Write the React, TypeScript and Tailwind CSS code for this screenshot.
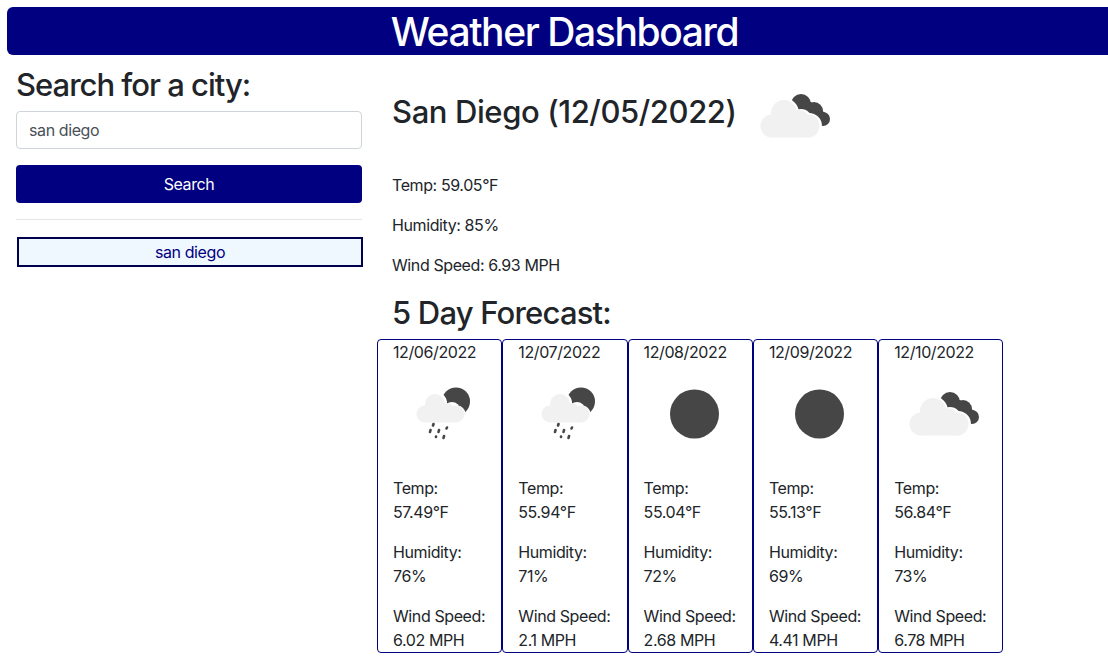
import React from "react";

type IconKind = "clouds" | "rain" | "clear";

function WeatherIcon({ kind }: { kind: IconKind }) {
  return (
    <svg viewBox="0 0 100 100" className="h-[100px] w-[100px] shrink-0">
      {kind === "clear" && <circle cx="50.5" cy="50" r="24.5" fill="#464646" />}
      {kind === "clouds" && (
        <>
          <g fill="#464646">
            <circle cx="56" cy="38" r="10" />
            <circle cx="69" cy="45" r="9" />
            <circle cx="78" cy="53" r="7" />
            <path d="M50 34 L66 36 L84 50 L72 60 L60 50 Z" />
          </g>
          <g fill="#fff">
            <circle cx="39" cy="47" r="15" />
            <circle cx="56" cy="54" r="11" />
            <circle cx="64" cy="60" r="13" />
          </g>
          <g fill="#f1f1f1">
            <circle cx="27" cy="60" r="11.5" />
            <circle cx="39" cy="47" r="13" />
            <circle cx="54" cy="54" r="10" />
            <circle cx="63" cy="60" r="11.5" />
            <rect x="27" y="56" width="36" height="15.5" />
          </g>
        </>
      )}
      {kind === "rain" && (
        <>
          <circle cx="63" cy="37.5" r="14" fill="#464646" />
          <g fill="#fff">
            <circle cx="43" cy="39" r="11" />
            <circle cx="59" cy="46" r="8" />
            <circle cx="64" cy="50" r="8.5" />
          </g>
          <g fill="#f1f1f1">
            <circle cx="32" cy="50" r="8.5" />
            <circle cx="42" cy="40" r="10" />
            <circle cx="54" cy="46" r="7" />
            <circle cx="63" cy="50" r="8.5" />
            <rect x="32" y="48" width="31" height="10.5" />
          </g>
          <g stroke="#464646" strokeWidth="2.6" strokeLinecap="round">
            <path d="M40.5 60 L40 61.5" />
            <path d="M37.5 66 L37 68" />
            <path d="M46 66 L45.5 68" />
            <path d="M54 63.5 L53.5 64.5" />
            <path d="M43 72.5 L43 73" />
            <path d="M51 72 L50.5 74" />
          </g>
        </>
      )}
    </svg>
  );
}

const forecast: { date: string; icon: IconKind; temp: string; humidity: string; wind: string }[] = [
  { date: "12/06/2022", icon: "rain", temp: "57.49°F", humidity: "76%", wind: "6.02 MPH" },
  { date: "12/07/2022", icon: "rain", temp: "55.94°F", humidity: "71%", wind: "2.1 MPH" },
  { date: "12/08/2022", icon: "clear", temp: "55.04°F", humidity: "72%", wind: "2.68 MPH" },
  { date: "12/09/2022", icon: "clear", temp: "55.13°F", humidity: "69%", wind: "4.41 MPH" },
  { date: "12/10/2022", icon: "clouds", temp: "56.84°F", humidity: "73%", wind: "6.78 MPH" },
];

function ForecastCard({ day }: { day: (typeof forecast)[number] }) {
  return (
    <div className="w-[125.3px] rounded border border-[#000080] px-[15px]">
      <div>{day.date}</div>
      <WeatherIcon kind={day.icon} />
      <p className="mb-4 mt-3">
        Temp:
        <br />
        {day.temp}
      </p>
      <p className="mb-4">
        Humidity:
        <br />
        {day.humidity}
      </p>
      <p>
        Wind Speed:
        <br />
        {day.wind}
      </p>
    </div>
  );
}

export default function App() {
  return (
    <div className="h-[665px] overflow-hidden bg-white pl-[7px] pt-[7px] font-['Inter',sans-serif] text-base leading-6 tracking-[-0.4px] text-[#212529]">
      <header className="flex h-12 items-center justify-center rounded-l-md bg-[#000080] pl-[14px] pt-[2px] text-[39px] font-[550] tracking-[-1.4px] text-white">
        Weather Dashboard
      </header>
      <div className="flex">
        <aside className="ml-[9px] w-[346px] shrink-0 pt-[11px]">
          <h2 className="h-[45px] text-[31px] font-medium leading-[38px] tracking-[-1px]">
            Search for a city:
          </h2>
          <div className="flex h-[38px] items-center rounded border border-[#ced4da] px-3 text-[#495057]">
            san diego
          </div>
          <button className="mt-4 h-[38px] w-full rounded bg-[#000080] text-white">
            Search
          </button>
          <hr className="mt-4 border-[#e6e6e6]" />
          <button className="ml-px mt-[17px] h-[30px] w-full border-2 border-[#000050] bg-[#f0f8ff] text-[#000080]">
            san diego
          </button>
        </aside>
        <main className="ml-[15px] min-w-0 flex-1">
          <div className="flex h-[111px] pt-[11px]">
            <h2 className="ml-[15px] mt-[27px] h-[38px] text-[31px] font-medium leading-[38px] tracking-[-0.4px]">
              San Diego (12/05/2022)
            </h2>
            <div className="ml-2">
              <WeatherIcon kind="clouds" />
            </div>
          </div>
          <div className="ml-[15px] mt-[7px]">
            <p className="mb-4">Temp: 59.05°F</p>
            <p className="mb-4">Humidity: 85%</p>
            <p className="mb-[17px]">Wind Speed: 6.93 MPH</p>
            <h2 className="mb-[7px] h-[38px] text-[31px] font-medium leading-[38px] tracking-[-0.8px]">
              5 Day Forecast:
            </h2>
          </div>
          <div className="flex">
            {forecast.map((day) => (
              <ForecastCard key={day.date} day={day} />
            ))}
          </div>
        </main>
      </div>
    </div>
  );
}
